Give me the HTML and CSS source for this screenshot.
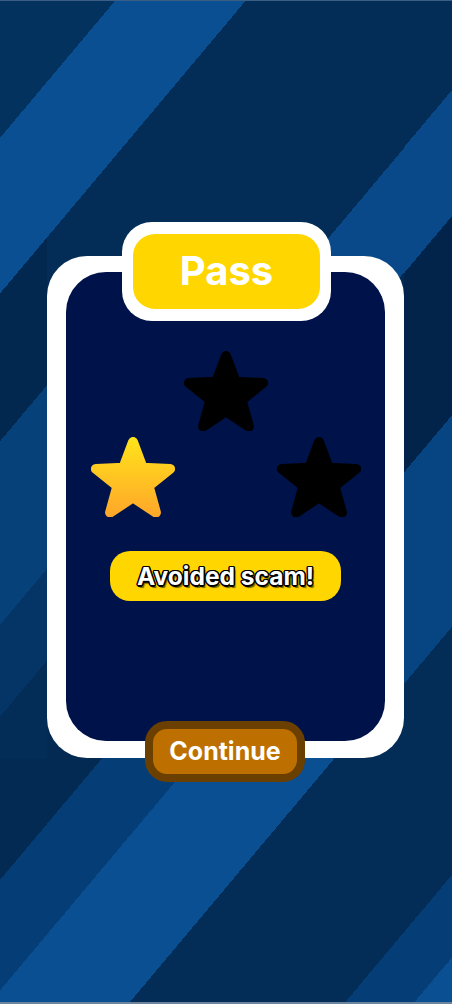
FILE: index.html
```html
<!DOCTYPE html>
<html lang="en">
<head>
<meta charset="utf-8">
<title>Pass</title>
<link rel="stylesheet" href="styles.css">
</head>
<body>
<div class="screen">
  <div class="card">
    <div class="tab"><div class="tab-label">Pass</div></div>
    <div class="panel">
      <div class="stars">
        <svg class="star star-side" viewBox="0 0 84 80" aria-hidden="true">
          <defs>
            <linearGradient id="gold" x1="0" y1="0" x2="0" y2="80" gradientUnits="userSpaceOnUse">
              <stop offset="0" stop-color="#ffe41a"/>
              <stop offset="1" stop-color="#ffa62a"/>
            </linearGradient>
          </defs>
          <polygon class="star-gold" points="42,5 51.64,30.73 79.09,31.95 57.6,49.07 64.92,75.55 42,60.4 19.08,75.55 26.4,49.07 4.91,31.95 32.36,30.73"/>
        </svg>
        <svg class="star" viewBox="0 0 84 80" aria-hidden="true">
          <polygon class="star-empty" points="42,5 51.64,30.73 79.09,31.95 57.6,49.07 64.92,75.55 42,60.4 19.08,75.55 26.4,49.07 4.91,31.95 32.36,30.73"/>
        </svg>
        <svg class="star star-side" viewBox="0 0 84 80" aria-hidden="true">
          <polygon class="star-empty" points="42,5 51.64,30.73 79.09,31.95 57.6,49.07 64.92,75.55 42,60.4 19.08,75.55 26.4,49.07 4.91,31.95 32.36,30.73"/>
        </svg>
      </div>
      <div class="pill">Avoided scam!</div>
    </div>
    <button class="continue" type="button">Continue</button>
  </div>
</div>
</body>
</html>
```
FILE: styles.css
```css
* { box-sizing: border-box; }
html, body { margin: 0; padding: 0; }
body {
  width: 452px;
  height: 1004px;
  overflow: hidden;
  font-family: Inter, "Noto Sans", "Liberation Sans", sans-serif;
}
.screen {
  width: 452px;
  height: 1004px;
  padding-top: 256px;
  padding-left: 47px;
  border-top: 1px solid #3b5f84;
  border-bottom: 2px solid #6c849c;
  background-image:
    linear-gradient(130deg,
      #04325f 0 88px,
      #0a4f91 88px 188px,
      #03284f 188px 283px,
      #064279 283px 401px,
      #053566 401px 460px,
      #032c57 460px 565px,
      #053e77 565px 636px,
      #0a4f92 636px 743px,
      #032c57 743px),
    linear-gradient(130deg,
      #032c56 0 94px,
      #09498a 94px 175px,
      #02234a 175px 303px,
      #064482 303px 439px,
      #032c57 439px 598px,
      #053e77 598px 652px,
      #0a4f92 652px),
    linear-gradient(130deg,
      #04325f 0 88px,
      #0a4f91 88px 188px,
      #032c56 188px 404px,
      #09498a 404px 484px,
      #032a52 484px 565px,
      #053e77 565px 636px,
      #0a4f92 636px 743px,
      #032c57 743px 908px,
      #053e77 908px 961px,
      #0a4f92 961px);
  background-size: 47px 758px, 48px 758px, 452px 1004px;
  background-position: left top, right top, left top;
  background-repeat: no-repeat;
}
.card {
  position: relative;
  width: 357px;
  height: 502px;
  margin-top: -1px;
  padding: 16px 19px 17px;
  background: #ffffff;
  border-radius: 40px;
}
.tab {
  position: absolute;
  top: -34px;
  left: 75px;
  width: 209px;
  height: 99px;
  padding: 12px 11px;
  background: #ffffff;
  border-radius: 30px;
}
.tab-label {
  height: 100%;
  display: flex;
  align-items: center;
  justify-content: center;
  background: #ffd600;
  border-radius: 22px;
  color: #ffffff;
  font-size: 40px;
  font-weight: 700;
  padding-bottom: 2px;
}
.panel {
  height: 100%;
  background: #00124a;
  border-radius: 40px;
  padding-top: 79px;
  display: flex;
  flex-direction: column;
  align-items: center;
}
.stars {
  display: flex;
  align-items: flex-start;
  gap: 9px;
  height: 166px;
}
.star {
  width: 84px;
  height: 80px;
  display: block;
}
.star-side { margin-top: 86px; }
.star-empty {
  fill: #000000;
  stroke: #000000;
  stroke-width: 10;
  stroke-linejoin: round;
}
.star-gold {
  fill: url(#gold);
  stroke: url(#gold);
  stroke-width: 10;
  stroke-linejoin: round;
}
.pill {
  margin-top: 34px;
  width: 231px;
  height: 50px;
  display: flex;
  align-items: center;
  justify-content: center;
  background: #ffd600;
  border-radius: 20px;
  color: #ffffff;
  font-size: 24.5px;
  font-weight: 700;
  text-shadow:
    1.5px 0 0 #000, -1.5px 0 0 #000, 0 1.5px 0 #000, 0 -1.5px 0 #000,
    1px 1px 0 #000, -1px 1px 0 #000, 1px -1px 0 #000, -1px -1px 0 #000,
    2px 3px 1px rgba(0,0,0,0.55);
}
.continue {
  position: absolute;
  top: 465px;
  left: 98px;
  width: 160px;
  height: 61px;
  border: 8px solid #6b3f00;
  border-radius: 22px;
  background: #bd7000;
  color: #ffffff;
  font-family: Inter, "Noto Sans", "Liberation Sans", sans-serif;
  font-size: 25px;
  font-weight: 700;
  padding: 0 0 2px;
  cursor: pointer;
}
```
